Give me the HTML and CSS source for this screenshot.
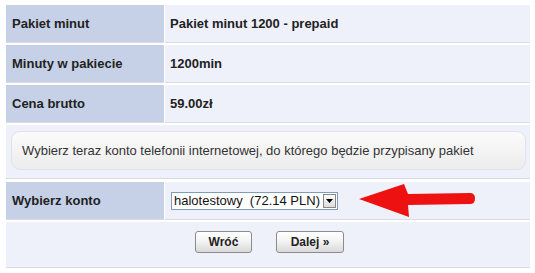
FILE: index.html
```html
<!DOCTYPE html>
<html lang="pl">
<head>
<meta charset="utf-8">
<title>Pakiet minut</title>
<link rel="stylesheet" href="styles.css">
</head>
<body>
<div class="form">
  <div class="row">
    <div class="label">Pakiet minut</div>
    <div class="value">Pakiet minut 1200 - prepaid</div>
  </div>
  <div class="row">
    <div class="label">Minuty w pakiecie</div>
    <div class="value">1200min</div>
  </div>
  <div class="row">
    <div class="label">Cena brutto</div>
    <div class="value">59.00zł</div>
  </div>
  <div class="row full">
    <div class="info">Wybierz teraz konto telefonii internetowej, do którego będzie przypisany pakiet</div>
  </div>
  <div class="row">
    <div class="label">Wybierz konto</div>
    <div class="value select-cell">
      <div class="select">
        <span class="select-text">halotestowy&nbsp; (72.14 PLN)</span>
        <span class="select-btn"><svg width="7" height="4" viewBox="0 0 7 4"><path d="M0 0h7L3.5 4z" fill="#000"/></svg></span>
      </div>
      <svg class="arrow" width="118" height="36" viewBox="0 0 118 36">
        <path d="M1 16 L46 1 L50 11 L112 10 Q117 10 117 15.5 Q117 21 112 21 L50 22 L51 34 Z" fill="#ee1111"/>
      </svg>
    </div>
  </div>
  <div class="row full buttons">
    <button class="btn">Wróć</button>
    <button class="btn">Dalej »</button>
  </div>
</div>
</body>
</html>
```
FILE: styles.css
```css
html, body {
  margin: 0;
  padding: 0;
  background: #ffffff;
}
body {
  font-family: "Liberation Sans", Arial, sans-serif;
  font-size: 13px;
  color: #222;
}
.form {
  margin: 5px 5px 0 6px;
  width: 524px;
  display: flex;
  flex-direction: column;
  gap: 2px;
}
.row {
  display: flex;
  gap: 1px;
}
.label, .value {
  height: 37px;
  border-bottom: 1px solid #d9dbe2;
  display: flex;
  align-items: center;
  font-weight: bold;
  box-sizing: content-box;
}
.label {
  width: 152px;
  flex: none;
  padding-left: 6px;
  background: #c6d1e7;
}
.value {
  flex: 1;
  padding-left: 5px;
  background: #eef0fa;
}
.full {
  background: #eef0fa;
  border-bottom: 1px solid #d9dbe2;
}
.row.full:nth-child(4) {
  height: 54px;
  padding: 6px 4px 0 5px;
  box-sizing: border-box;
  margin-bottom: 1px;
}
.info {
  flex: 1;
  height: 39px;
  box-sizing: border-box;
  border: 1px solid #e2e3e8;
  border-radius: 9px;
  background: linear-gradient(#fbfbfb, #ececec);
  display: flex;
  align-items: center;
  padding-left: 10px;
  color: #333;
  font-weight: normal;
}
.select-cell {
  padding-left: 6px;
  gap: 20px;
}
.select {
  width: 167px;
  height: 18px;
  box-sizing: border-box;
  border: 1px solid #7f9db9;
  background: #fff;
  display: flex;
  align-items: center;
  font-weight: normal;
  color: #111;
  padding-left: 2px;
}
.select-text {
  flex: 1;
  white-space: nowrap;
  font-size: 13px;
}
.select-btn {
  width: 13px;
  height: 14px;
  margin-right: 1px;
  box-sizing: border-box;
  border: 1px solid #888;
  background: linear-gradient(#fafafa, #dcdcdc);
  display: flex;
  align-items: center;
  justify-content: center;
}
.arrow {
  display: block;
  margin-top: 1px;
}
.buttons {
  height: 46px;
  justify-content: center;
  align-items: flex-start;
  padding-top: 9px;
  padding-left: 3px;
  box-sizing: border-box;
  gap: 24px;
}
.btn {
  height: 22px;
  padding: 0 12px;
  border: 1px solid #8c8c8c;
  border-radius: 3px;
  background: linear-gradient(#ffffff, #f4f4f4 45%, #d9d9d9);
  font-family: "Liberation Sans", Arial, sans-serif;
  font-size: 12px;
  font-weight: bold;
  color: #222;
}
.btn:first-child {
  width: 57px;
}
.btn:last-child {
  width: 68px;
}
```
